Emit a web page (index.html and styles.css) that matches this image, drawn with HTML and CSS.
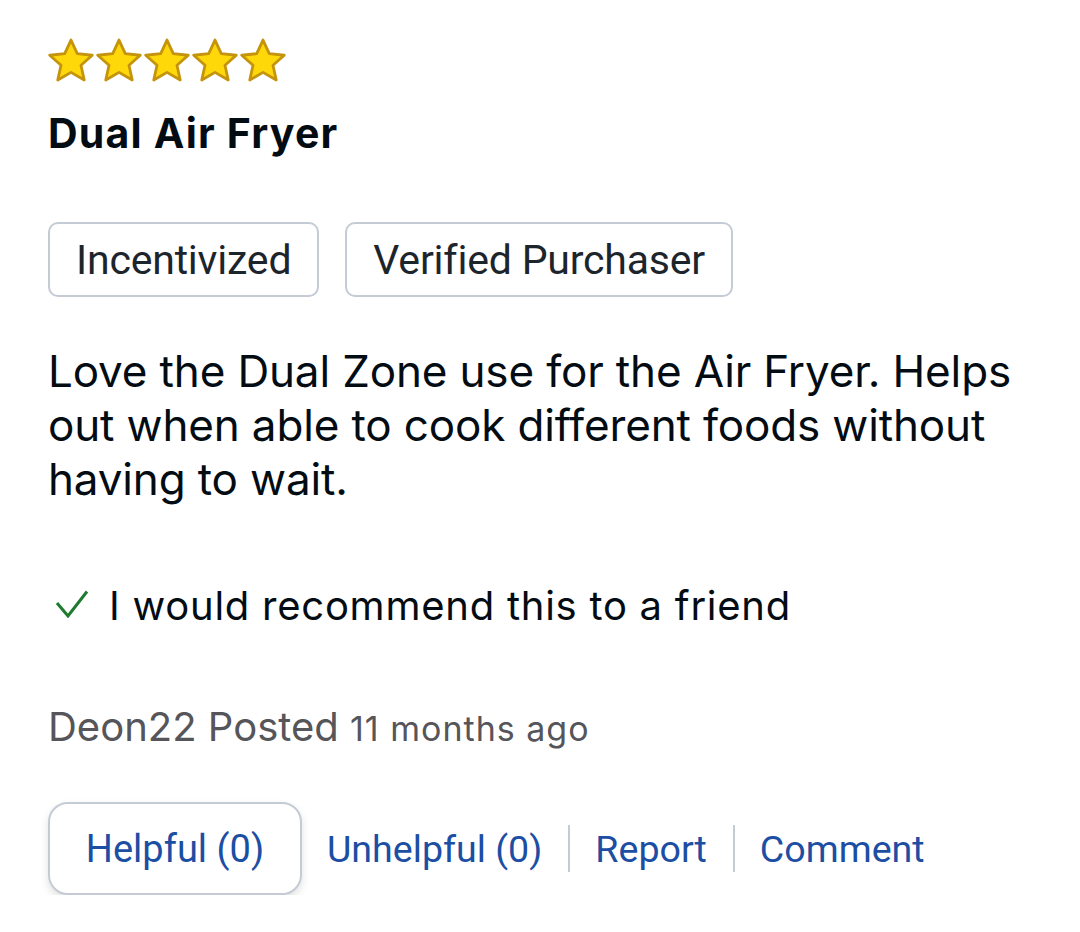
FILE: index.html
```html
<!DOCTYPE html>
<html>
<head>
<meta charset="utf-8">
<link rel="stylesheet" href="styles.css">
</head>
<body>
<div class="review">
  <div class="stars">
    <svg class="star" viewBox="1.4 1.4 21.2 20"><path d="M12 2.2l2.9 6.3 6.9.7-5.2 4.6 1.5 6.8L12 17.1l-6.1 3.5 1.5-6.8-5.2-4.6 6.9-.7z"/></svg>
    <svg class="star" viewBox="1.4 1.4 21.2 20"><path d="M12 2.2l2.9 6.3 6.9.7-5.2 4.6 1.5 6.8L12 17.1l-6.1 3.5 1.5-6.8-5.2-4.6 6.9-.7z"/></svg>
    <svg class="star" viewBox="1.4 1.4 21.2 20"><path d="M12 2.2l2.9 6.3 6.9.7-5.2 4.6 1.5 6.8L12 17.1l-6.1 3.5 1.5-6.8-5.2-4.6 6.9-.7z"/></svg>
    <svg class="star" viewBox="1.4 1.4 21.2 20"><path d="M12 2.2l2.9 6.3 6.9.7-5.2 4.6 1.5 6.8L12 17.1l-6.1 3.5 1.5-6.8-5.2-4.6 6.9-.7z"/></svg>
    <svg class="star" viewBox="1.4 1.4 21.2 20"><path d="M12 2.2l2.9 6.3 6.9.7-5.2 4.6 1.5 6.8L12 17.1l-6.1 3.5 1.5-6.8-5.2-4.6 6.9-.7z"/></svg>
  </div>
  <h2 class="title">Dual Air Fryer</h2>
  <div class="tags">
    <span class="tag">Incentivized</span>
    <span class="tag">Verified Purchaser</span>
  </div>
  <p class="body">Love the Dual Zone use for the Air Fryer. Helps out when able to cook different foods without having to wait.</p>
  <div class="recommend">
    <svg class="check" viewBox="0 0 34 28"><path d="M2 13l11 13L32 1.5"/></svg>
    <span>I would recommend this to a friend</span>
  </div>
  <div class="posted"><span class="author">Deon22 Posted</span> <span class="time">11 months ago</span></div>
  <div class="actions">
    <button class="helpful">Helpful (0)</button>
    <span class="link">Unhelpful (0)</span>
    <span class="sep"></span>
    <span class="link">Report</span>
    <span class="sep"></span>
    <span class="link">Comment</span>
  </div>
</div>
</body>
</html>
```

FILE: styles.css
```css
html, body {
  margin: 0;
  padding: 0;
  background: #fff;
}
body {
  font-family: Inter, "Noto Sans", sans-serif;
  color: #040c13;
}
.review {
  padding: 38px 40px 0 48px;
}
.stars {
  display: flex;
  gap: 2px;
  height: 44px;
  align-items: center;
}
.star {
  width: 46px;
  height: 44px;
  fill: #ffd80a;
  stroke: #c3940c;
  stroke-width: 1.3;
  stroke-linejoin: round;
}
.title {
  margin: 26px 0 0 0;
  font-size: 41px;
  font-weight: 700;
  line-height: 50px;
  letter-spacing: 1.2px;
}
.tags {
  display: flex;
  gap: 26px;
  margin-top: 64px;
}
.tag {
  box-sizing: border-box;
  height: 75px;
  display: flex;
  align-items: center;
  padding: 0 26px;
  border: 2px solid #c5cbd5;
  border-radius: 10px;
  font-family: Roboto, "Noto Sans", sans-serif;
  font-size: 41px;
  letter-spacing: -0.2px;
  color: #1d252c;
}
.body {
  margin: 47px 0 0 0;
  font-size: 44px;
  line-height: 54px;
  letter-spacing: -0.15px;
  color: #040c13;
}
.recommend {
  display: flex;
  align-items: center;
  gap: 20px;
  margin-top: 76px;
  font-size: 40px;
  line-height: 48px;
  letter-spacing: 0.75px;
  padding-left: 7px;
}
.check {
  width: 34px;
  height: 28px;
  fill: none;
  stroke: #1e7b30;
  stroke-width: 3;
  margin-top: -4px;
}
.posted {
  margin-top: 73px;
  font-size: 40px;
  line-height: 48px;
  color: #55555a;
}
.author {
  font-size: 40px;
}
.time {
  font-size: 34px;
  letter-spacing: 1px;
}
.actions {
  display: flex;
  align-items: center;
  margin-top: 49px;
}
.helpful {
  box-sizing: border-box;
  font-family: Roboto, "Noto Sans", sans-serif;
  font-size: 38px;
  color: #1c4ea4;
  background: #fff;
  border: 2px solid #c5cbd5;
  border-radius: 20px;
  height: 93px;
  width: 254px;
  padding: 0;
  box-shadow: 0 4px 8px rgba(0,0,0,0.12);
}
.link {
  font-family: Roboto, "Noto Sans", sans-serif;
  font-size: 37.6px;
  color: #1c4ea4;
  padding: 0 26px 0 25px;
}
.sep {
  width: 2px;
  height: 47px;
  background: #c5cbd5;
}
```
